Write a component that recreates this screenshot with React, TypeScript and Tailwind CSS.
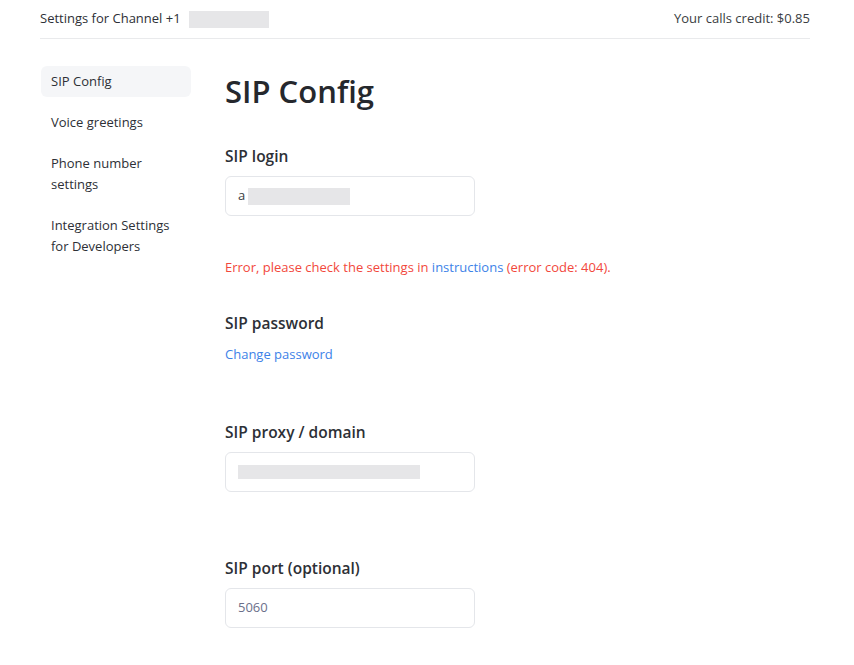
import React from 'react';

const font = { fontFamily: '"Open Sans", "Noto Sans", sans-serif' };

function Blur({ className }: { className: string }) {
  return <span className={`inline-block bg-[#e6e6e8] ${className}`} />;
}

const navItems = ['SIP Config', 'Voice greetings', 'Phone number settings', 'Integration Settings for Developers'];

function Field({ label, children, className = '' }: { label: string; children: React.ReactNode; className?: string }) {
  return (
    <div className={className}>
      <div className="text-[15.5px] font-semibold leading-6 text-[#2d3036]">{label}</div>
      <div className="mt-[8px] flex h-10 w-[250px] items-center rounded-md border border-[#e4e6ea] bg-white px-3 text-[13px]">
        {children}
      </div>
    </div>
  );
}

export default function App() {
  return (
    <div className="min-h-[665px] bg-white text-[#2d3036]" style={font}>
      <div className="ml-[40px] mr-[44px] flex h-[39px] items-center justify-between border-b border-[#e9eaec] text-[13px]">
        <div className="flex items-center">
          <span>Settings for Channel +1</span>
          <Blur className="ml-[8px] h-[17px] w-[80px]" />
        </div>
        <span className="text-[#3a3d42]">Your calls credit: $0.85</span>
      </div>

      <div className="flex pl-[41px] pt-[26px]">
        <nav className="flex w-[150px] flex-col gap-[10px] pt-px text-[13px] leading-[21px]">
          {navItems.map((item, i) => (
            <div
              key={item}
              className={`rounded-md px-[10px] py-[5px] ${i === 0 ? 'bg-[#f5f6f8]' : ''}`}
            >
              {item}
            </div>
          ))}
        </nav>

        <main className="ml-[34px] flex flex-col">
          <h1 className="mt-[4px] text-[31px] font-semibold leading-[44px] text-[#25282d]">SIP Config</h1>

          <Field label="SIP login" className="mt-[31px]">
            <span className="text-[#3a3d42]">a</span>
            <Blur className="ml-[3px] h-[17px] w-[102px]" />
          </Field>

          <p className="mt-[41px] text-[13px] leading-5 text-[#f2483c]">
            Error, please check the settings in <a className="text-[#3d82e8]">instructions</a> (error code: 404).
          </p>

          <div className="mt-[34px] text-[15.5px] font-semibold leading-6 text-[#2d3036]">SIP password</div>
          <a className="mt-[9px] text-[13px] leading-5 text-[#3d82e8]">Change password</a>

          <Field label="SIP proxy / domain" className="mt-[56px]">
            <Blur className="h-[14px] w-[182px]" />
          </Field>

          <Field label="SIP port (optional)" className="mt-[64px]">
            <span className="text-[#6b6f8a]">5060</span>
          </Field>
        </main>
      </div>
    </div>
  );
}
